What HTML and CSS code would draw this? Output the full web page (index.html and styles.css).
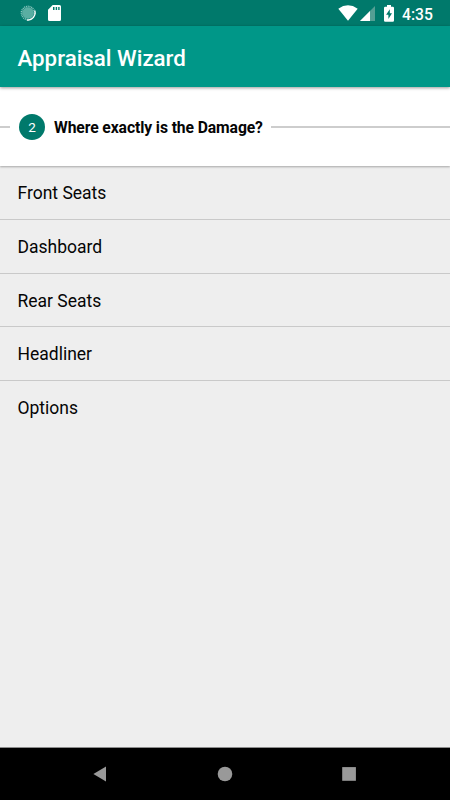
FILE: index.html
```html
<!DOCTYPE html>
<html lang="en">
<head>
<meta charset="utf-8">
<meta name="viewport" content="width=device-width, initial-scale=1">
<title>Appraisal Wizard</title>
<link rel="stylesheet" href="styles.css">
</head>
<body>
<div class="screen">
  <div class="status">
    <svg class="spinner" width="16" height="16" viewBox="0 0 16 16">
      <circle cx="8" cy="8" r="5.8" fill="#5aaea2"/>
      <circle cx="8" cy="8" r="6.6" fill="none" stroke="#8bc6be" stroke-width="1.6" stroke-dasharray="1 .8"/>
      <path d="M14.7 5.5A7.2 7.2 0 0 1 7 15" fill="none" stroke="#fff" stroke-width="1.3"/>
    </svg>
    <svg class="sdcard" width="13" height="16" viewBox="0 0 13 16">
      <path fill="#fff" fill-rule="evenodd" d="M4.7 0H11.5Q13 0 13 1.5V14.5Q13 16 11.5 16H1.5Q0 16 0 14.5V4.7ZM5 2V5H6.5V2ZM7.7 2V5H9.1V2ZM10.2 2V5H11.6V2Z"/>
    </svg>
    <span class="spacer"></span>
    <svg class="wifi" width="20" height="16" viewBox="0 0 20 16">
      <path fill="#fff" d="M.3 3.7Q10-3.1 19.7 3.7L10 15.7Z"/>
    </svg>
    <svg class="signal" width="15" height="15" viewBox="0 0 15 15">
      <path fill="#549f94" d="M0 15L15 0V15Z"/>
      <path fill="#fff" d="M0 15L10 5V15Z"/>
    </svg>
    <svg class="battery" width="10" height="17" viewBox="0 0 10 17">
      <path fill="#fff" d="M3 0H7V1.7H8.8Q10 1.7 10 2.9V15.5Q10 16.7 8.8 16.7H1.2Q0 16.7 0 15.5V2.9Q0 1.7 1.2 1.7H3Z"/>
      <path fill="#00796b" d="M5.8 4.2L2.1 9.8H4.4V14L8 8.2H5.8Z"/>
    </svg>
    <span class="time">4:35</span>
  </div>
  <header class="appbar"><h1>Appraisal Wizard</h1></header>
  <section class="step">
    <span class="rule rule-start"></span>
    <span class="number">2</span>
    <h2>Where exactly is the Damage?</h2>
    <span class="rule rule-end"></span>
  </section>
  <ul class="list">
    <li>Front Seats</li>
    <li>Dashboard</li>
    <li>Rear Seats</li>
    <li>Headliner</li>
    <li>Options</li>
  </ul>
  <nav class="navbar">
    <svg width="16" height="16" viewBox="0 0 16 16"><path fill="#999" d="M1.4 8L14 .6V15.4Z"/></svg>
    <svg width="16" height="16" viewBox="0 0 16 16"><circle cx="8" cy="8" r="7.3" fill="#999"/></svg>
    <svg width="16" height="16" viewBox="0 0 16 16"><rect x="1.2" y="1.1" width="13.7" height="13.7" fill="#999"/></svg>
  </nav>
</div>
</body>
</html>
```

FILE: styles.css
```css
* { box-sizing: border-box; }

body {
  margin: 0;
  font-family: Roboto, sans-serif;
  color: #050505;
}

svg { display: block; flex: none; }

.screen {
  display: flex;
  flex-direction: column;
  width: 450px;
  height: 800px;
  overflow: hidden;
  background: #eee;
}

.status {
  display: flex;
  align-items: flex-start;
  flex: 0 0 26px;
  padding: 5px 17px 0 20px;
  background: #00796b;
}

.sdcard { margin-left: 12px; }
.spacer { flex: 1; }
.signal { margin: 1px 0 0 2px; }
.battery { margin-left: 9px; }

.time {
  width: 31px;
  margin-left: 8px;
  padding-top: 1px;
  color: #fff;
  font-size: 15.7px;
  font-weight: 500;
  line-height: 18px;
  white-space: nowrap;
}

.appbar {
  position: relative;
  z-index: 2;
  flex: 0 0 61px;
  padding: 4px 0 0 17.5px;
  background: #009788;
  box-shadow: 0 1px 3px rgba(0, 0, 0, .4);
}

h1 {
  margin: 0;
  color: #fff;
  font-size: 22.3px;
  font-weight: 500;
  line-height: 57px;
}

.step {
  position: relative;
  z-index: 1;
  display: flex;
  align-items: center;
  flex: 0 0 79px;
  background: #fff;
  box-shadow: 0 1px 2px rgba(0, 0, 0, .3);
}

.rule { height: 2px; background: #cdcdcd; }
.rule-start { width: 10px; }
.rule-end { flex: 1; margin-left: 8px; }

.number {
  width: 26px;
  height: 26px;
  margin: 0 9px;
  border-radius: 50%;
  background: #00796b;
  color: #fff;
  font-size: 13.5px;
  line-height: 27px;
  text-align: center;
}

h2 {
  margin: 0;
  padding-top: 2px;
  font-size: 15.7px;
  font-weight: 700;
  letter-spacing: -.1px;
  line-height: 20px;
  white-space: nowrap;
}

.list {
  flex: 1;
  margin: 0;
  padding: 0;
  list-style: none;
}

.list li {
  height: 53.8px;
  padding-left: 17.5px;
  border-bottom: 1px solid #c9c9c9;
  font-size: 17.5px;
  line-height: 54.6px;
}

.list li:last-child { border-bottom: 0; }

.navbar {
  display: flex;
  justify-content: space-between;
  align-items: center;
  flex: 0 0 53px;
  padding: 0 93px 1px 92px;
  border-top: 1px solid #8c8c8c;
  background: #000;
}
```
